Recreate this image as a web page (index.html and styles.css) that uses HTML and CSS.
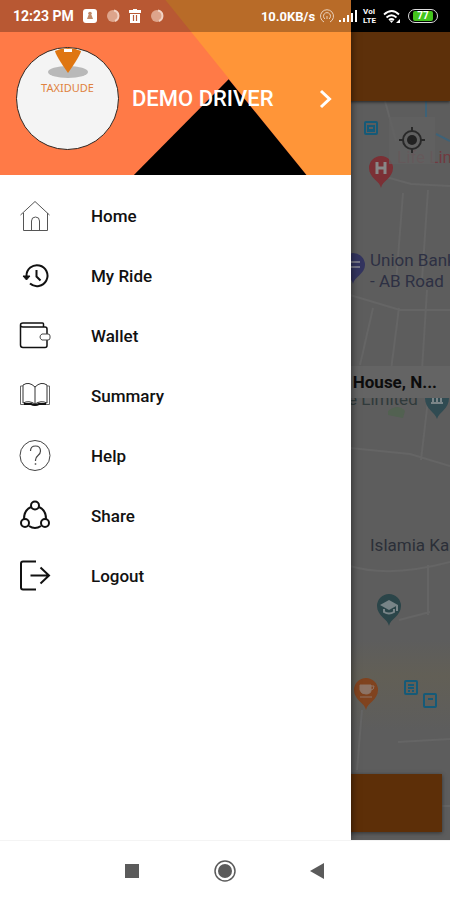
FILE: index.html
```html
<!DOCTYPE html>
<html lang="en">
<head>
<meta charset="utf-8">
<meta name="viewport" content="width=device-width, initial-scale=1">
<title>Taxidude Driver</title>
<link rel="stylesheet" href="styles.css">
</head>
<body>
<div class="phone">
  <div class="screen">
    <div class="status">
      <div class="status-group status-left">
        <span>12:23 PM</span>
        <svg width="16" height="16" viewBox="0 0 16 16"><rect x="1" y="1" width="14" height="14" rx="3" fill="#fff"/><circle cx="8" cy="5.500" r="1.800" fill="#c08a68"/><path d="M5 11l1.500-4h3l1.500 4z" fill="#c08a68"/></svg>
        <svg width="14" height="14" viewBox="0 0 14 14"><circle cx="7" cy="7" r="6" fill="#dda48b"/><path d="M8 1.500a5.500 5.500 0 0 1 1 10.500" fill="none" stroke="#f2d3c5" stroke-width="2"/></svg>
        <svg width="14" height="16" viewBox="0 0 14 16"><path d="M5 1h4v1h4v3H1V2h4zM2 6h10v9H2z" fill="#fff"/><path d="M5.500 7v6M8.500 7v6" stroke="#b85a38" stroke-width="1.200"/></svg>
        <svg width="14" height="14" viewBox="0 0 14 14"><circle cx="7" cy="7" r="6" fill="#dda48b"/><path d="M8 1.500a5.500 5.500 0 0 1 1 10.500" fill="none" stroke="#f2d3c5" stroke-width="2"/></svg>
      </div>
      <div class="status-group status-right">
        <span>10.0KB/s</span>
        <svg width="16" height="16" viewBox="0 0 16 16" fill="none" stroke="#ead2bd"><path d="M5 14A6.500 6.500 0 1 1 11 14"/><path d="M6 11a3.500 3.500 0 1 1 4 0"/><path d="M8 8v3"/></svg>
        <svg width="18" height="14" viewBox="0 0 18 14"><path d="M0 11h2v2H0zM4 9h2v4H4zM8 6h2v7H8zM12 4h2v9h-2zM16 1h2v12h-2z" fill="#fff"/></svg>
        <span class="volte"><span>VoI</span><span>LTE</span></span>
        <svg width="18" height="15" viewBox="0 0 18 15" fill="none" stroke="#fff" stroke-width="1.800"><path d="M1 5.500q8-7 15 0M3.500 8.500q5-4.500 10 0M6 11q2.500-2 5 0"/><path d="M8.500 14l-2-2.500h4z" fill="#fff" stroke="none"/><path d="M17 10v4h-4z" fill="#fff" stroke="none"/></svg>
        <span class="battery"><span>77</span></span>
      </div>
    </div>

    <main class="app">
      <div class="appbar"></div>
      <div class="map">
        <svg class="map-art" viewBox="0 101 450 739" preserveAspectRatio="xMaxYMin slice">
          <defs><linearGradient id="sand" x1="0" y1="0" x2="0" y2="1"><stop offset="0" stop-color="#625f55" stop-opacity="0"/><stop offset=".4" stop-color="#625f56"/><stop offset="1" stop-color="#625f55" stop-opacity="0"/></linearGradient></defs>
          <rect x="350" y="640" width="100" height="90" fill="url(#sand)"/>
          <g fill="none" stroke="#656565" stroke-width="2">
            <path d="M386 177l25 7 39 2M403 193l-7 90M428 190l-6 90M350 295l50 15h50M373 308l-13 57M399 308l-9 70M427 290l-5 80M350 448l60 6 40 12M428 400l-7 60M385 101l11 40M350 566q40 12 100-4M428 565v50M399 620l31-8M362 710l-5 60M398 742l52-3M442 806h8"/>
          </g>
          <path d="M388 411q10-8 17 0l-2 7-15-3z" fill="#526151"/>
          <path d="M426 101v16M436 134l14 7" fill="none" stroke="#3e6277" stroke-width="2"/>
          <g fill="none" stroke="#155a78" stroke-width="2"><rect x="365" y="122" width="12" height="12" rx="1"/><path d="M368 126h6v5h-6zM368 130h6"/><rect x="405" y="681" width="12" height="13" rx="1"/><path d="M408 685h6M408 688h6M408 691h2M412 691h2"/><rect x="424" y="694" width="12" height="13" rx="1"/><path d="M428 699h5"/></g>
          <path d="M381 188c-1-7-12-10-12-20a12 12 0 0 1 24 0c0 10-11 13-12 20z" fill="#7b3035"/><path d="M377 162v12M385 162v12M377 168h8" stroke="#888" stroke-width="3"/>
          <path d="M353 284c-1-7-12-10-12-19a12 12 0 0 1 24 0c0 9-11 12-12 19z" fill="#33345f"/><path d="M350 262h10M350 267h10" stroke="#747486" stroke-width="2"/>
          <path d="M437 419c-2-7-12-10-12-21h24c0 11-10 14-12 21z" fill="#304b52"/><path d="M431 403h12M433 398v5M437 398v5M441 398v5" stroke="#7a8588" stroke-width="2"/>
          <path d="M389 626c-1-7-12-10-12-20a12 12 0 0 1 24 0c0 10-11 13-12 20z" fill="#2b4549"/><path d="M380 605l9-5 9 5-9 5z" fill="#788487"/><path d="M384 609v3q5 3 10 0v-3M397 605v6" fill="none" stroke="#788487" stroke-width="2"/>
          <path d="M366 710c-1-7-12-10-12-20a12 12 0 0 1 24 0c0 10-11 13-12 20z" fill="#80431f"/><path d="M360 685h11v5q0 4-5 4t-6-4zM360 697h12" fill="#8d7466" stroke="#8d7466"/><path d="M371 686h3q0 4-3 4" fill="none" stroke="#8d7466"/>
        </svg>
        <span class="label label-life">Life Line</span>
        <span class="label label-bank">Union Bank<br>- AB Road</span>
        <span class="label label-limited">e Limited</span>
        <span class="label label-islamia">Islamia Kal</span>
        <button class="locate" type="button" aria-label="My location"><svg width="28" height="28" viewBox="0 0 28 28" fill="none" stroke="#292929" stroke-width="2"><circle cx="14" cy="14" r="9"/><path d="M14 1v5M14 22v5M1 14h5M22 14h5"/><circle cx="14" cy="14" r="5" fill="#222" stroke="none"/></svg></button>
        <div class="address">House, N...</div>
        <button class="action" type="button" aria-label="Confirm"></button>
      </div>
    </main>

    <aside class="drawer">
      <header class="profile">
        <svg class="profile-art" viewBox="0 0 350 175" preserveAspectRatio="xMaxYMin slice"><path d="M165 0h185v175H306z" fill="#ff9538"/><path d="M228 79l78 96H133z" fill="#000"/></svg>
        <div class="avatar">
          <svg width="44" height="30" viewBox="0 0 44 30"><ellipse cx="22" cy="24" rx="20" ry="6" fill="#b9b9b9"/><path d="M9 3Q22-3 35 3Q34 8 22 25Q10 8 9 3z" fill="#df7611"/><path d="M18 1h8v3h-8z" fill="#fff"/></svg>
          <span>TAXIDUDE</span>
        </div>
        <a class="driver" href="#profile"><span>DEMO DRIVER</span>
          <svg width="14" height="20" viewBox="0 0 14 20" fill="none" stroke="#fff" stroke-width="3"><path d="M2 2l8.500 8-8.500 8"/></svg>
        </a>
      </header>
      <nav class="menu">
        <a href="#home"><svg viewBox="0 0 32 32" stroke-width="1"><path d="M1.500 15L16 1.500 30.500 15M4.500 13v17.500h24V13M12.500 30v-9q0-4 4-4t4 4v9" stroke="#555"/></svg><span>Home</span></a>
        <a href="#rides"><svg viewBox="0 0 32 32" stroke-width="2"><path d="M7.500 16A10.500 10.500 0 1 1 11 23.500" /><path d="M4 16h7l-3.500 4z" fill="#111" stroke-width="1"/><path d="M17.500 10v6.500l4 4"/></svg><span>My Ride</span></a>
        <a href="#wallet"><svg viewBox="0 0 32 32" stroke-width="1.500"><path d="M24.500 7V4q0-1-1-1H4Q1.500 3 1.500 5v20q0 2.500 2.500 2.500h22q2 0 2-2V20M1.500 5q0 2 2.500 2h22q2 0 2 2v5"/><path d="M23 14h6q2 0 2 2v2q0 2-2 2h-6q-2-1-2-3t2-3z" stroke="#444" stroke-width="1"/></svg><span>Wallet</span></a>
        <a href="#summary"><svg viewBox="0 0 32 32" stroke-width="1"><path d="M16 7Q10 1 4 5v18q6-3 12 1 6-4 12-1V5Q22 1 16 7zv17" stroke="#333"/><path d="M4 6H1.500v18.500H13q3 2 6 0h11.500V6H28" stroke="#666"/><path d="M5 24h7q4 2 8 0h7" stroke-width="2"/></svg><span>Summary</span></a>
        <a href="#help"><svg viewBox="0 0 32 32" stroke-width="1"><circle cx="16" cy="15.500" r="15" stroke="#444"/><path d="M11.500 11q0-5 5-5t5 5q0 2.500-2.500 4.500T16.500 20v1" stroke="#444" stroke-width="1.200"/><path d="M16.500 23v2" stroke="#777" stroke-width="1.500"/></svg><span>Help</span></a>
        <a href="#share"><svg viewBox="0 0 32 32" stroke-width="2"><circle cx="16" cy="5.500" r="4"/><circle cx="6" cy="23" r="4"/><circle cx="26" cy="23" r="4"/><path d="M12 7Q5 10 5 19M20 7q7 3 7 12M10 26q6 4 12 0"/></svg><span>Share</span></a>
        <a href="#logout"><svg viewBox="0 0 32 32" stroke-width="2"><path d="M17 1.500H4q-2 0-2 2v24q0 2 2 2h13M11.500 15.500H29M21.500 7.500l8.500 8-8.500 8"/></svg><span>Logout</span></a>
      </nav>
    </aside>
  </div>

  <footer class="system-nav">
    <button type="button" aria-label="Recent apps"><svg width="24" height="24" viewBox="0 0 24 24"><path d="M5 5h14v14H5z" fill="#5b5b5b"/></svg></button>
    <button type="button" aria-label="Home"><svg width="24" height="24" viewBox="0 0 24 24"><circle cx="12" cy="12" r="10" fill="none" stroke="#5b5b5b" stroke-width="1.500"/><circle cx="12" cy="12" r="7" fill="#5b5b5b"/></svg></button>
    <button type="button" aria-label="Back"><svg width="24" height="24" viewBox="0 0 24 24"><path d="M18 4v16L4 12z" fill="#5b5b5b"/></svg></button>
  </footer>
</div>
</body>
</html>
```
FILE: styles.css
```css
* { box-sizing: border-box; }
body { margin: 0; font-family: Roboto, "Liberation Sans", sans-serif; color: #111; background: #fff; }
button { border: 0; padding: 0; font: inherit; background: none; }
a { color: inherit; text-decoration: none; }
svg { display: block; flex: none; }

.phone { min-height: 100vh; display: flex; flex-direction: column; }
.screen { flex: 1; position: relative; display: grid; grid-template-columns: minmax(0, 1fr); overflow: hidden; }
.app, .drawer { grid-area: 1 / 1; }

.status {
  position: absolute; inset: 0 0 auto; z-index: 3; height: 32px; padding: 0 12px 0 13px;
  display: flex; align-items: center; justify-content: space-between;
  color: #fff; font-size: 14px; font-weight: 700; background: rgba(0, 0, 0, .28);
}
.status-group { display: flex; align-items: center; }
.status-left { gap: 8px; }
.status-right { font-size: 13px; gap: 4px; }
.volte { display: grid; font-size: 8px; line-height: 9px; margin: 0 3px 0 2px; }
.battery { width: 30px; height: 14px; margin-left: 3px; padding: 1px; border: 1px solid #ddd; border-radius: 7px; display: flex; justify-content: center; }
.battery span { width: 20px; background: #43c51c; border-radius: 2px; font-size: 10px; line-height: 10px; text-align: center; }

.app { display: flex; flex-direction: column; background: #5f5f5f; }
.appbar { height: 101px; border-top: 32px solid #000; background: #5d300a; box-shadow: 0 1px 3px #222; z-index: 1; }
.map { flex: 1; position: relative; overflow: hidden; background: #5d5d5d; }
.map-art { position: absolute; inset: 0; width: 100%; height: 100%; }
.label { position: absolute; left: calc(100% - 80px); font-size: 17px; line-height: 21px; white-space: nowrap; color: #2b2f38; }
.label-life { left: calc(100% - 53px); top: 46px; color: #713a40; }
.label-bank { top: 149px; color: #2d3043; }
.label-limited { left: calc(100% - 102px); top: 288px; color: #303a3b; }
.label-islamia { top: 434px; }
.locate { position: absolute; top: 16px; right: 15px; width: 46px; height: 47px; display: flex; justify-content: center; padding-top: 9px; background: rgba(97, 97, 97, .8); }
.address { position: absolute; top: 265px; right: 0; width: 100%; padding: 0 13px; background: #646464; color: #0c0c0c; font-size: 17px; font-weight: 700; line-height: 32px; text-align: right; }
.action { position: absolute; left: 8px; right: 8px; bottom: 8px; height: 58px; background: #5d2f08; box-shadow: 0 1px 4px #333; }

.drawer { position: relative; z-index: 2; width: 78%; background: #fff; box-shadow: 0 0 8px rgba(0, 0, 0, .6); }
.profile { position: relative; height: 175px; padding: 32px 18px 10px 16px; display: flex; align-items: center; gap: 13px; background: #ff7a47; overflow: hidden; }
.profile-art { position: absolute; inset: 0; width: 100%; height: 100%; }
.avatar { position: relative; width: 103px; height: 103px; flex: none; border: 1px solid #30251f; border-radius: 50%; background: #f4f4f4; display: flex; flex-direction: column; align-items: center; overflow: hidden; color: #df8240; font: 11px/14px "Noto Sans", sans-serif; gap: 3px; }
.driver { position: relative; flex: 1; display: flex; align-items: center; justify-content: space-between; color: #fff; font-size: 22px; font-weight: 500; white-space: nowrap; }
.menu { padding-top: 11px; }
.menu a { display: flex; align-items: center; gap: 40px; height: 60px; padding-left: 19px; font-size: 17px; font-weight: 500; }
.menu svg { width: 32px; height: 32px; fill: none; stroke: #111; }

.system-nav { height: 60px; padding: 0 86px; display: flex; align-items: center; justify-content: center; gap: 69px; background: #fff; border-top: 1px solid #f4f4f4; }
```
